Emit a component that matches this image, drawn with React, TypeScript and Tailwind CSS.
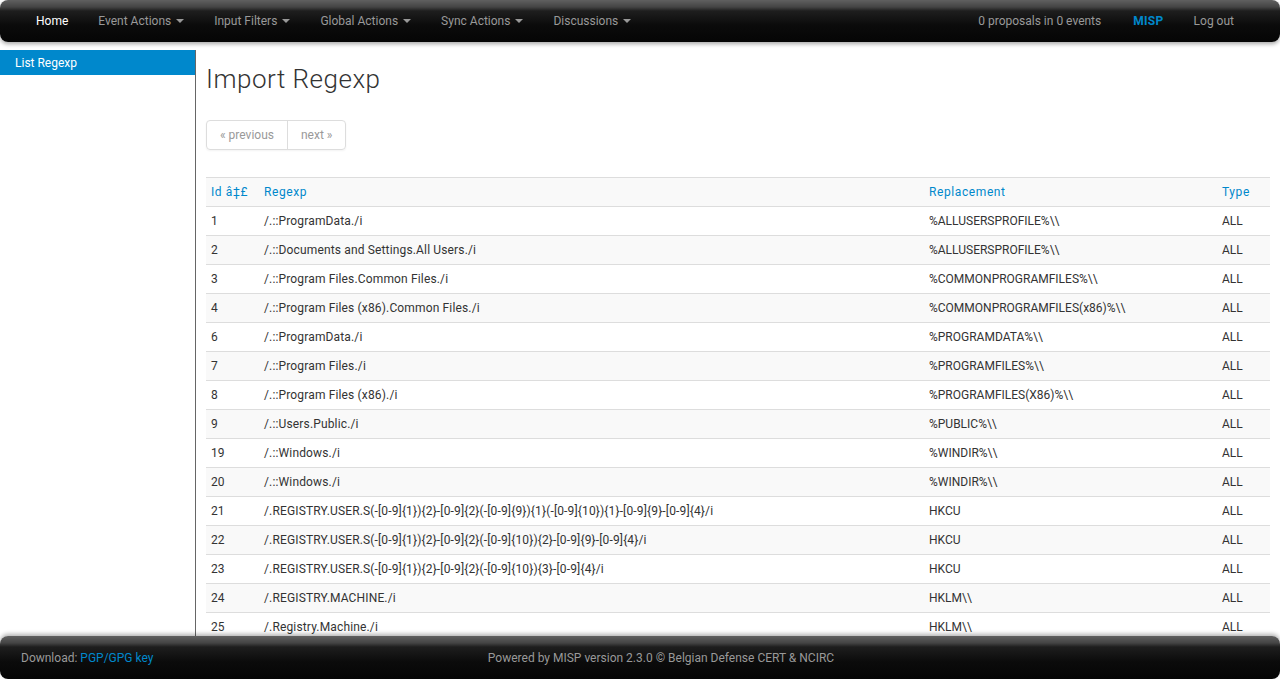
import React from 'react';

const navItems = ['Event Actions', 'Input Filters', 'Global Actions', 'Sync Actions', 'Discussions'];

const rows: [string, string, string][] = [
  ['1', '/.::ProgramData./i', '%ALLUSERSPROFILE%\\\\'],
  ['2', '/.::Documents and Settings.All Users./i', '%ALLUSERSPROFILE%\\\\'],
  ['3', '/.::Program Files.Common Files./i', '%COMMONPROGRAMFILES%\\\\'],
  ['4', '/.::Program Files (x86).Common Files./i', '%COMMONPROGRAMFILES(x86)%\\\\'],
  ['6', '/.::ProgramData./i', '%PROGRAMDATA%\\\\'],
  ['7', '/.::Program Files./i', '%PROGRAMFILES%\\\\'],
  ['8', '/.::Program Files (x86)./i', '%PROGRAMFILES(X86)%\\\\'],
  ['9', '/.::Users.Public./i', '%PUBLIC%\\\\'],
  ['19', '/.::Windows./i', '%WINDIR%\\\\'],
  ['20', '/.::Windows./i', '%WINDIR%\\\\'],
  ['21', '/.REGISTRY.USER.S(-[0-9]{1}){2}-[0-9]{2}(-[0-9]{9}){1}(-[0-9]{10}){1}-[0-9]{9}-[0-9]{4}/i', 'HKCU'],
  ['22', '/.REGISTRY.USER.S(-[0-9]{1}){2}-[0-9]{2}(-[0-9]{10}){2}-[0-9]{9}-[0-9]{4}/i', 'HKCU'],
  ['23', '/.REGISTRY.USER.S(-[0-9]{1}){2}-[0-9]{2}(-[0-9]{10}){3}-[0-9]{4}/i', 'HKCU'],
  ['24', '/.REGISTRY.MACHINE./i', 'HKLM\\\\'],
  ['25', '/.Registry.Machine./i', 'HKLM\\\\'],
];

const Caret = () => (
  <span className="inline-block ml-[5px] mb-[1px] align-middle w-0 h-0 border-l-[4px] border-r-[4px] border-t-[4px] border-l-transparent border-r-transparent border-t-[#999]" />
);

const barBg =
  'bg-[linear-gradient(to_bottom,#606060_0px,#444_7px,#1e1e1e_11px,#0b0b0b_60%,#050505_100%)]';

export default function App() {
  return (
    <div className="h-[679px] flex flex-col overflow-hidden bg-white font-['Roboto',sans-serif] text-[12px] text-[#333]">
      <nav className={`h-[42px] shrink-0 rounded-[8px] ${barBg} shadow-[0_2px_4px_rgba(0,0,0,0.35)] flex items-center text-[12px] z-10`}>
        <div className="flex items-center pl-[36px]">
          <span className="text-white mr-[30px]">Home</span>
          {navItems.map((n) => (
            <span key={n} className="text-[#999] mr-[30px] flex items-center">
              {n}
              <Caret />
            </span>
          ))}
        </div>
        <div className="ml-auto flex items-center pr-[46px]">
          <span className="text-[#999]">0 proposals in 0 events</span>
          <span className="text-[#0088cc] font-bold ml-[32px] tracking-[0.3px]">MISP</span>
          <span className="text-[#999] ml-[30px]">Log out</span>
        </div>
      </nav>

      <div className="flex-1 flex min-h-0 pt-[8px]">
        <aside className="w-[196px] shrink-0 border-r border-[#666]">
          <div className="h-[25px] bg-[#0088cc] text-white pl-[15px] pt-[4px]">List Regexp</div>
        </aside>
        <main className="flex-1 pl-[10px] pr-[10px] min-w-0">
          <h2 className="text-[26px] leading-[40px] tracking-[0.5px] font-light text-[#333] mt-[9px]">Import Regexp</h2>
          <div className="mt-[21px] inline-flex border border-[#ddd] rounded-[4px] shadow-[0_1px_2px_rgba(0,0,0,0.05)] text-[#999]">
            <span className="px-[13px] leading-[28px] border-r border-[#ddd]">« previous</span>
            <span className="px-[13px] leading-[28px]">next »</span>
          </div>
          <table className="mt-[27px] w-full border-collapse border-t border-[#ddd]">
            <tbody>
              <tr className="bg-[#f9f9f9] text-[#0088cc] tracking-[0.6px]">
                <th className="w-[52px] text-left font-normal px-[5px] h-[29px] border-b border-[#ddd]">Id â‡£</th>
                <th className="w-[665px] text-left font-normal px-[6px] border-b border-[#ddd]">Regexp</th>
                <th className="w-[293px] text-left font-normal px-[6px] border-b border-[#ddd]">Replacement</th>
                <th className="text-left font-normal px-[6px] border-b border-[#ddd]">Type</th>
              </tr>
              {rows.map(([id, re, rep], i) => (
                <tr key={id} className={i % 2 === 1 ? 'bg-[#f9f9f9]' : 'bg-white'}>
                  <td className="px-[5px] h-[29px] pb-[1px] border-b border-[#ddd]">{id}</td>
                  <td className="px-[6px] pb-[1px] border-b border-[#ddd] whitespace-nowrap tracking-[0.15px]">{re}</td>
                  <td className="px-[6px] pb-[1px] border-b border-[#ddd]">{rep}</td>
                  <td className="px-[6px] pb-[1px] border-b border-[#ddd]">ALL</td>
                </tr>
              ))}
            </tbody>
          </table>
        </main>
      </div>

      <footer className={`h-[43px] shrink-0 rounded-[8px] ${barBg} shadow-[0_-2px_4px_rgba(0,0,0,0.3)] flex items-center text-[#999] text-[12px] relative z-10`}>
        <div className="pl-[21px] w-[400px]">
          Download: <span className="text-[#0088cc]">PGP/GPG key</span>
        </div>
        <div className="flex-1 text-center pr-[358px]">Powered by MISP version 2.3.0 © Belgian Defense CERT &amp; NCIRC</div>
      </footer>
    </div>
  );
}
